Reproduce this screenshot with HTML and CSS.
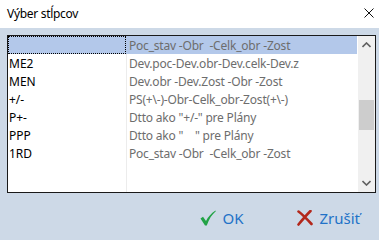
FILE: index.html
```html
<!DOCTYPE html>
<html lang="sk">
<head>
    <meta charset="UTF-8">
    <title>Výber stĺpcov</title>
    <link rel="stylesheet" href="styles.css">
</head>
<body>
    <div class="dialog">
        <div class="titlebar">
            <span class="title">Výber stĺpcov</span>
            <svg class="close" width="10" height="10" viewBox="0 0 10 10">
                <path d="M0.5 0.5 L9.5 9.5 M9.5 0.5 L0.5 9.5" stroke="#111" stroke-width="1" fill="none"/>
            </svg>
        </div>

        <div class="content">
            <div class="listbox">
                <div class="rows">
                    <div class="row selected"><div class="c1"></div><div class="c2">Poc_stav -Obr &nbsp;-Celk_obr -Zost</div></div>
                    <div class="row"><div class="c1">ME2</div><div class="c2">Dev.poc-Dev.obr-Dev.celk-Dev.z</div></div>
                    <div class="row"><div class="c1">MEN</div><div class="c2">Dev.obr -Dev.Zost -Obr -Zost</div></div>
                    <div class="row"><div class="c1">+/-</div><div class="c2">PS(+\-)-Obr-Celk_obr-Zost(+\-)</div></div>
                    <div class="row"><div class="c1">P+-</div><div class="c2">Dtto ako "+/-" pre Plány</div></div>
                    <div class="row"><div class="c1">PPP</div><div class="c2">Dtto ako " &nbsp;&nbsp;&nbsp;" pre Plány</div></div>
                    <div class="row"><div class="c1">1RD</div><div class="c2">Poc_stav -Obr &nbsp;-Celk_obr -Zost</div></div>
                </div>
                <div class="scrollbar">
                    <svg class="arrow" width="9" height="6" viewBox="0 0 9 6">
                        <path d="M0.5 5 L4.5 1 L8.5 5" stroke="#606060" stroke-width="1.6" fill="none"/>
                    </svg>
                    <div class="track"><div class="thumb"></div></div>
                    <svg class="arrow" width="9" height="6" viewBox="0 0 9 6">
                        <path d="M0.5 1 L4.5 5 L8.5 1" stroke="#606060" stroke-width="1.6" fill="none"/>
                    </svg>
                </div>
            </div>

            <div class="buttons">
                <button class="btn">
                    <svg width="16" height="16" viewBox="0 0 16 16">
                        <path d="M0.5 8.5 L3 6.8 L6 11 C8 7 11 3.5 15.5 0.5 L15.8 1.3 C12 4.5 9 9 6.8 15.5 L5 15.5 Z" fill="#22a346"/>
                    </svg>
                    <span>OK</span>
                </button>
                <button class="btn">
                    <svg width="16" height="16" viewBox="0 0 16 16">
                        <path d="M1.5 1.5 C5 4 8 7 14.5 14 M13.5 1 C10 4.5 6 9 1.5 14.5" stroke="#b3281c" stroke-width="2.6" stroke-linecap="round" fill="none"/>
                    </svg>
                    <span>Zrušiť</span>
                </button>
            </div>
        </div>
    </div>
</body>
</html>
```

FILE: styles.css
```css
body {
    margin: 0;
    padding: 0;
    font-family: "Noto Sans", "DejaVu Sans", sans-serif;
    font-size: 12px;
    color: #000;
}

.dialog {
    width: 379px;
    height: 240px;
    background: #cdd9e7;
    display: flex;
    flex-direction: column;
}

.titlebar {
    height: 28px;
    background: #fff;
    display: flex;
    align-items: center;
    justify-content: space-between;
    padding: 0 5px 0 7px;
    box-sizing: border-box;
}

.title {
    font-size: 12px;
    letter-spacing: -0.3px;
    margin-top: -2px;
}

.close {
    margin-top: -3px;
}

.content {
    flex: 1;
    padding: 7px 3px 0 7px;
    display: flex;
    flex-direction: column;
}

.listbox {
    height: 158px;
    box-sizing: border-box;
    border: 1px solid #1a1a1a;
    background: #fff;
    display: flex;
}

.rows {
    flex: 1;
    padding-right: 1px;
    background: linear-gradient(to right, transparent 118px, #ececec 118px, #ececec 119px, transparent 119px);
}

.row {
    height: 18px;
    line-height: 19px;
    display: flex;
    white-space: nowrap;
}

.c1 {
    width: 118px;
    padding-left: 1px;
    box-sizing: border-box;
}

.c2 {
    flex: 1;
    padding-left: 3px;
    color: #6d6d6d;
    letter-spacing: -0.2px;
    overflow: hidden;
}

.row.selected {
    background: #b3c8ea;
}

.row.selected .c1 {
    border: 1px dotted #000;
}

.scrollbar {
    width: 17px;
    background: #f0f0f0;
    display: flex;
    flex-direction: column;
    align-items: center;
}

.arrow {
    margin: 6px 0;
}

.track {
    flex: 1;
    width: 100%;
    padding-top: 46px;
}

.thumb {
    height: 30px;
    margin: 0 1px;
    background: #cdcdcd;
}

.buttons {
    flex: 1;
    display: flex;
    justify-content: flex-end;
    align-items: center;
    gap: 54px;
    padding-right: 16px;
    padding-top: 3px;
}

.btn {
    background: none;
    border: none;
    padding: 0;
    display: flex;
    align-items: center;
    gap: 6px;
    font-family: "Noto Sans", "DejaVu Sans", sans-serif;
    font-size: 15px;
    color: #2272c8;
}
```
